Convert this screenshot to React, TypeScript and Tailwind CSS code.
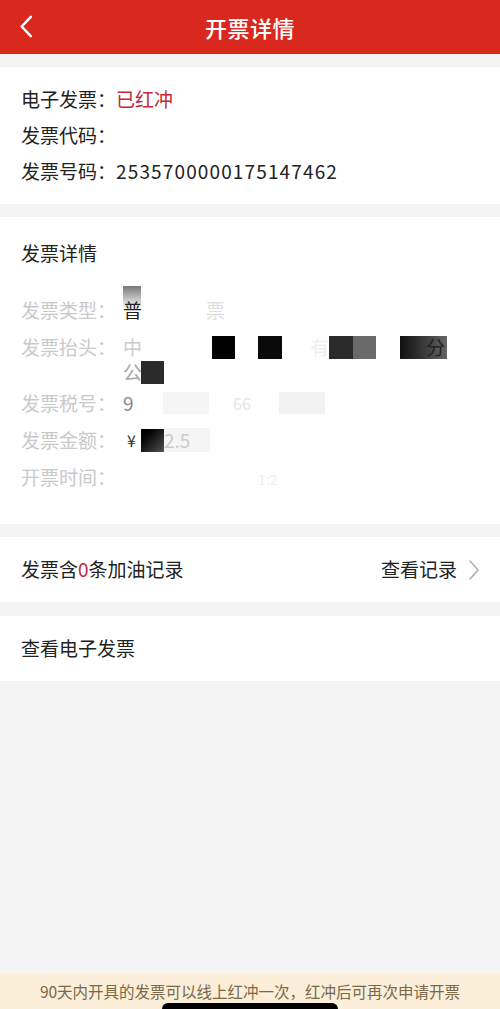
import { ReactNode } from 'react';

const font = { fontFamily: '"Noto Sans CJK SC", "Noto Sans", sans-serif' };

function Row({ label, className = '', children }: { label: string; className?: string; children?: ReactNode }) {
  return (
    <div className={`flex items-start ${className}`}>
      <span className="w-[102px] shrink-0 text-[#c9c9c9]">{label}</span>
      <div className="flex-1">{children}</div>
    </div>
  );
}

/** Mosaic block used to mask sensitive values */
function Block({ className }: { className: string }) {
  return <span className={`inline-block align-middle ${className}`} />;
}

export default function App() {
  return (
    <div
      className="flex min-h-[1009px] w-[500px] flex-col bg-[#f4f4f4] text-[19px] text-[#222]"
      style={font}
    >
      {/* ── Header ── */}
      <header className="relative flex h-[54px] shrink-0 items-center justify-center bg-[#d9281d]">
        <svg
          viewBox="0 0 14 24"
          className="absolute left-[19px] top-[15px] h-[23px] w-[14px]"
          fill="none"
          stroke="white"
          strokeWidth="2.6"
          strokeLinecap="round"
          strokeLinejoin="round"
        >
          <path d="M12 2 L2.5 12 L12 22" />
        </svg>
        <h1 className="text-[22px] font-medium tracking-[0.02em] text-white">开票详情</h1>
      </header>

      {/* ── Basic info ── */}
      <section className="mt-[13px] flex flex-col gap-[12px] bg-white px-[21px] pb-[21px] pt-[20px] leading-[24px]">
        <div>
          电子发票：<span className="text-[#c3283a]">已红冲</span>
        </div>
        <div>发票代码：</div>
        <div>
          发票号码：<span className="tracking-[0.06em]">2535700000175147462</span>
        </div>
      </section>

      {/* ── Detail ── */}
      <section className="mt-[13px] bg-white px-[21px] pb-[33px] pt-[24px] leading-[24px]">
        <h2 className="mb-[33px]">发票详情</h2>
        <div className="flex flex-col gap-[13px]">
          <Row label="发票类型：">
            <div className="flex items-center">
              <span className="relative">
                <span className="absolute -top-[12px] left-0 h-[23px] w-[18px] bg-gradient-to-b from-[#777] to-[#ddd]/0" />
                <span className="relative">普</span>
              </span>
              <span className="ml-[64px] text-[#ddd]">票</span>
            </div>
          </Row>
          <Row label="发票抬头：">
            <div className="flex items-center">
              <span className="w-[89px] text-[#ccc]">中</span>
              <Block className="h-[23px] w-[23px] bg-black" />
              <span className="w-[23px]" />
              <Block className="h-[23px] w-[24px] bg-[#0a0a0a]" />
              <span className="w-[47px] text-right text-[#eee]">有</span>
              <Block className="h-[23px] w-[24px] bg-[#2a2a2a]" />
              <Block className="h-[23px] w-[23px] bg-[#6a6a6a]" />
              <span className="w-[24px]" />
              <span className="flex h-[23px] w-[47px] items-center justify-end bg-gradient-to-r from-[#111] to-[#666] pr-[2px] text-[#222]">
                分
              </span>
            </div>
            <div className="mt-[1px] flex items-center">
              <span className="w-[18px] text-[#aaa]">公</span>
              <Block className="h-[23px] w-[23px] bg-[#2b2b2b]" />
            </div>
          </Row>
          <Row label="发票税号：" className="-mt-[6px]">
            <div className="flex items-center text-[#ddd]">
              <span className="w-[40px] text-[#888]">9</span>
              <Block className="h-[22px] w-[46px] bg-[#f5f5f5]" />
              <span className="ml-[24px] w-[46px] text-[16px] text-[#e4e4e4]">66</span>
              <Block className="h-[22px] w-[46px] bg-[#f2f2f2]" />
            </div>
          </Row>
          <Row label="发票金额：">
            <div className="flex items-center">
              <span className="ml-[4px] w-[14px] text-[16px] text-[#333]">¥</span>
              <Block className="h-[23px] w-[23px] bg-gradient-to-br from-[#000] to-[#555]" />
              <span className="w-[46px] bg-[#f5f5f5] text-[#ccc]">2.5</span>
            </div>
          </Row>
          <Row label="开票时间：">
            <span className="ml-[135px] text-[14px] text-[#eee]">1:2</span>
          </Row>
        </div>
      </section>

      {/* ── Fuel records ── */}
      <section className="mt-[13px] flex h-[65px] items-center justify-between bg-white px-[21px]">
        <span>
          发票含<span className="text-[#c3283a]">0</span>条加油记录
        </span>
        <span className="flex items-center gap-[12px]">
          查看记录
          <svg
            viewBox="0 0 10 20"
            className="h-[20px] w-[10px]"
            fill="none"
            stroke="#b0b0b0"
            strokeWidth="1.6"
            strokeLinecap="round"
            strokeLinejoin="round"
          >
            <path d="M1 1 L9 10 L1 19" />
          </svg>
        </span>
      </section>

      {/* ── E-invoice ── */}
      <section className="mt-[14px] flex h-[65px] items-center bg-white px-[21px]">
        查看电子发票
      </section>

      <div className="flex-1" />

      {/* ── Notice ── */}
      <footer className="relative flex h-[35px] items-center justify-center bg-[#fcefd9] text-[15.5px] text-[#7a6848]">
        90天内开具的发票可以线上红冲一次，红冲后可再次申请开票
        <span className="absolute bottom-0 left-[162px] h-[6px] w-[176px] rounded-t-full bg-black" />
      </footer>
    </div>
  );
}
